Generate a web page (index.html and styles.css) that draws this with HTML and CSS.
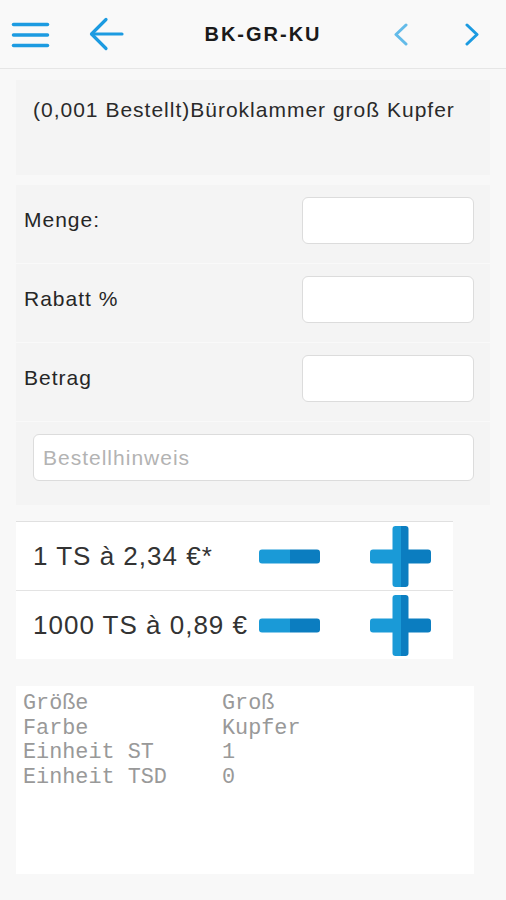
FILE: index.html
```html
<!DOCTYPE html>
<html lang="de">
<head>
<meta charset="utf-8">
<title>BK-GR-KU</title>
<link rel="stylesheet" href="styles.css">
</head>
<body>
<header class="header">
  <svg class="menu" width="39" height="27" viewBox="0 0 39 27">
    <g stroke="#1c9be1" stroke-width="3.5" stroke-linecap="round">
      <line x1="2.5" y1="3.5" x2="36.5" y2="3.5"/>
      <line x1="2.5" y1="14" x2="36.5" y2="14"/>
      <line x1="2.5" y1="24.5" x2="36.5" y2="24.5"/>
    </g>
  </svg>
  <svg class="back" width="35" height="34" viewBox="0 0 35 34">
    <g fill="none" stroke="#1c9be1" stroke-width="3.2" stroke-linecap="round" stroke-linejoin="round">
      <line x1="3" y1="17" x2="33" y2="17"/>
      <polyline points="17,2.5 2.5,17 17,31.5"/>
    </g>
  </svg>
  <div class="title">BK-GR-KU</div>
  <svg class="prev" width="16" height="23" viewBox="0 0 16 23">
    <polyline points="13,2 3,11.5 13,21" fill="none" stroke="#63bbe9" stroke-width="3" stroke-linecap="round" stroke-linejoin="round"/>
  </svg>
  <svg class="next" width="16" height="23" viewBox="0 0 16 23">
    <polyline points="3,2 13,11.5 3,21" fill="none" stroke="#1c9be1" stroke-width="3" stroke-linecap="round" stroke-linejoin="round"/>
  </svg>
</header>

<section class="desc">(0,001 Bestellt)Büroklammer groß Kupfer</section>

<section class="form">
  <div class="row"><span class="label">Menge:</span><div class="input"></div></div>
  <div class="row"><span class="label">Rabatt %</span><div class="input"></div></div>
  <div class="row"><span class="label">Betrag</span><div class="input"></div></div>
  <div class="row note-row"><div class="note">Bestellhinweis</div></div>
</section>

<section class="prices">
  <div class="price-row">
    <span class="price">1 TS à 2,34 €*</span>
    <svg class="btn minus" width="61" height="61" viewBox="0 0 61 61">
      <defs>
        <linearGradient id="g1" x1="0" y1="0" x2="61" y2="0" gradientUnits="userSpaceOnUse">
          <stop offset="0.5" stop-color="#1a9ad7"/><stop offset="0.5" stop-color="#0b7dc0"/>
        </linearGradient>
      </defs>
      <rect x="0" y="23.5" width="61" height="14" rx="3" fill="url(#g1)"/>
    </svg>
    <svg class="btn plus" width="61" height="61" viewBox="0 0 61 61">
      <rect x="0" y="23.5" width="61" height="14" rx="3" fill="url(#g1)"/>
      <rect x="22.5" y="0" width="16" height="61" rx="3" fill="url(#g1)"/>
    </svg>
  </div>
  <div class="price-row">
    <span class="price">1000 TS à 0,89 €</span>
    <svg class="btn minus" width="61" height="61" viewBox="0 0 61 61">
      <rect x="0" y="23.5" width="61" height="14" rx="3" fill="url(#g1)"/>
    </svg>
    <svg class="btn plus" width="61" height="61" viewBox="0 0 61 61">
      <rect x="0" y="23.5" width="61" height="14" rx="3" fill="url(#g1)"/>
      <rect x="22.5" y="0" width="16" height="61" rx="3" fill="url(#g1)"/>
    </svg>
  </div>
</section>

<section class="details">
  <span>Größe</span><span>Groß</span>
  <span>Farbe</span><span>Kupfer</span>
  <span>Einheit ST</span><span>1</span>
  <span>Einheit TSD</span><span>0</span>
</section>
</body>
</html>
```

FILE: styles.css
```css
* { box-sizing: border-box; }
html, body { margin: 0; padding: 0; }
body {
  width: 506px;
  min-height: 900px;
  background: #f8f8f8;
  font-family: "Liberation Sans", Arial, sans-serif;
  color: #222;
}

.header {
  height: 69px;
  display: flex;
  align-items: center;
  padding: 0 26px 0 11px;
  background: #f9f9f9;
  border-bottom: 1px solid #e6e6e6;
}
.menu { flex: none; }
.back { flex: none; margin-left: 39px; }
.title {
  flex: 1;
  text-align: center;
  padding-left: 9px;
  font-size: 20px;
  font-weight: bold;
  letter-spacing: 2px;
  color: #1a1a1a;
}
.prev { flex: none; }
.next { flex: none; margin-left: 55px; }

.desc {
  margin: 11px 16px 0 16px;
  height: 95px;
  padding: 18px 0 0 17px;
  background: #f4f4f4;
  font-size: 21px;
  line-height: 24px;
  letter-spacing: 1px;
  color: #2a2a2a;
}

.form {
  margin: 10px 16px 0 16px;
  background: #f4f4f4;
}
.row {
  height: 79px;
  display: flex;
  align-items: center;
  justify-content: space-between;
  padding: 12px 16px 20px 8px;
  border-bottom: 1px solid #f9f9f9;
}
.label {
  font-size: 21px;
  letter-spacing: 1px;
  color: #262626;
}
.input {
  width: 172px;
  height: 47px;
  background: #fff;
  border: 1px solid #dcdcdc;
  border-radius: 6px;
}
.note-row {
  height: 83px;
  padding: 12px 16px 24px 17px;
  border-bottom: none;
}
.note {
  width: 100%;
  height: 47px;
  background: #fff;
  border: 1px solid #dcdcdc;
  border-radius: 6px;
  padding-left: 9px;
  display: flex;
  align-items: center;
  font-size: 21px;
  letter-spacing: 1px;
  color: #b3b3b3;
}

.prices {
  margin: 16px 0 0 16px;
  width: 437px;
  border-top: 1px solid #e0e0e0;
}
.price-row {
  height: 68px;
  display: flex;
  align-items: center;
  padding-left: 17px;
  background: #fff;
}
.price-row + .price-row { border-top: 1px solid #e3e3e3; height: 69px; }
.price {
  flex: none;
  width: 226px;
  font-size: 26px;
  letter-spacing: 1px;
  color: #333;
  white-space: nowrap;
}
.btn { display: block; flex: none; }
.plus { margin-left: 50px; }

.details {
  margin: 27px 32px 0 16px;
  height: 188px;
  background: #fff;
  padding: 6px 0 0 7px;
  display: grid;
  grid-template-columns: 199px auto;
  align-content: start;
  font-family: "Liberation Mono", "Courier New", monospace;
  font-size: 21.8px;
  line-height: 24.5px;
  color: #999;
}
```
